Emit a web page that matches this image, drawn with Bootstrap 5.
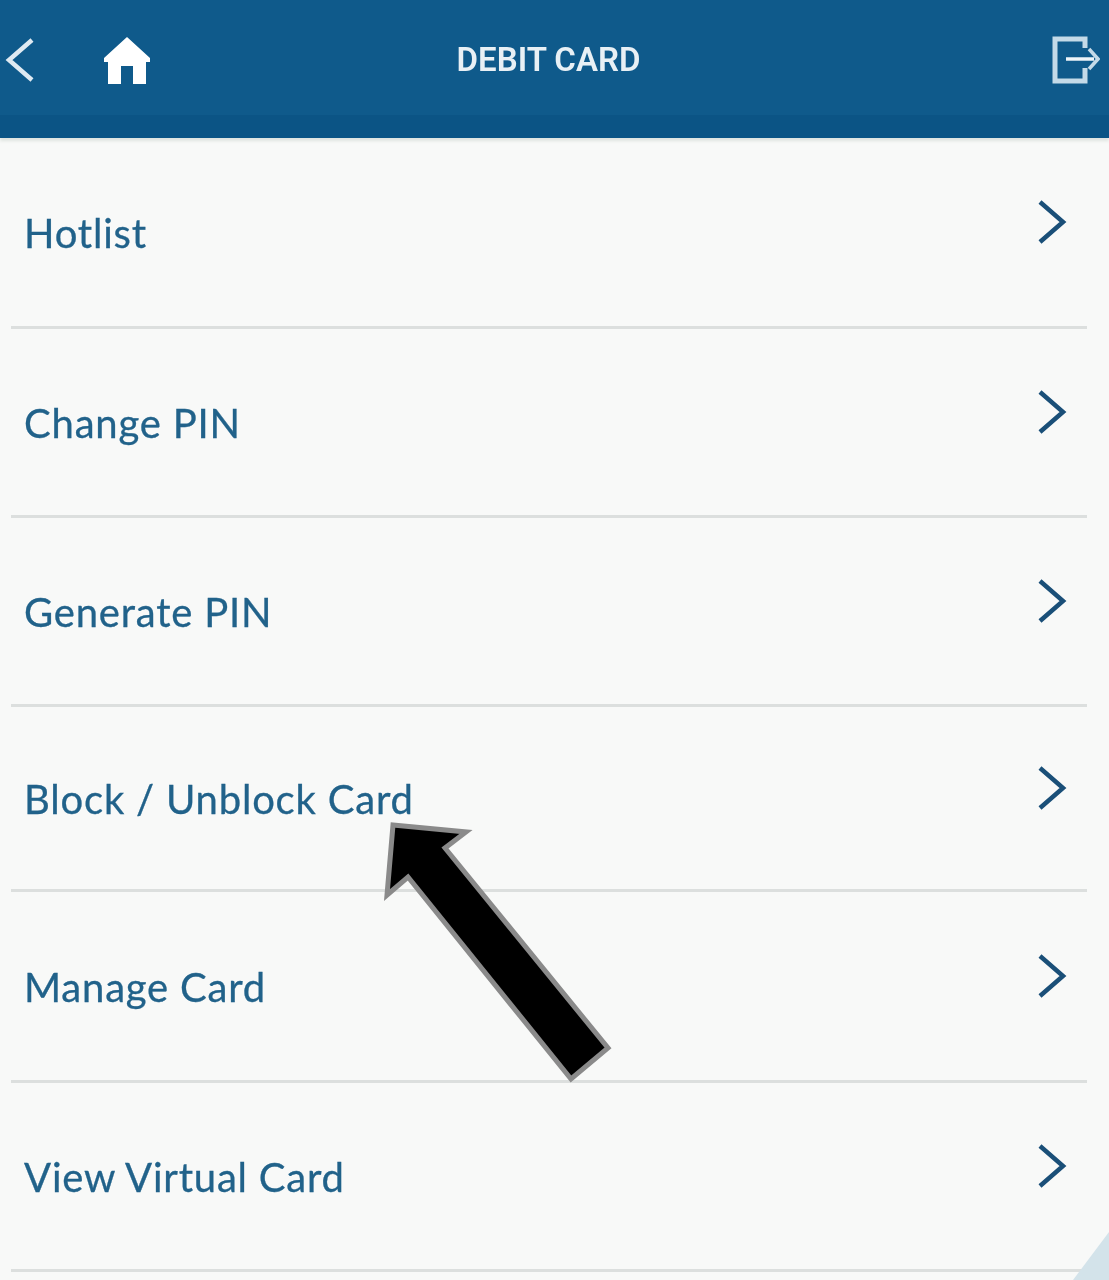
<!DOCTYPE html>
<html lang="en">
<head>
  <meta charset="UTF-8">
  <title>Debit Card</title>
  <link href="https://cdn.jsdelivr.net/npm/bootstrap@5.3.3/dist/css/bootstrap.min.css" rel="stylesheet">
  <style>
    html, body { height: 1280px; overflow: hidden; }
    body { background: #f8f9f8; font-family: "Lato", "Liberation Sans", sans-serif; position: relative; }
    .top-head { height: 138px; background: #0f5a8b; border-bottom: 23px solid #0b5485; box-shadow: 0 3px 3px #dfe4e0; padding: 5px 9px 0 5px; }
    .head-title { color: #e8f0f5; font-size: 33px; font-weight: 600; font-family: "Roboto", sans-serif; margin-left: -8px; filter: blur(.5px); }
    .head-side { width: 150px; filter: blur(.5px); }
    .home-icon { margin-left: 69px; }
    .menu-list { --bs-list-group-bg: transparent; --bs-list-group-border-width: 0; padding: 0 22px 0 11px; }
    .menu-row { height: 189px; padding: 0 20px 0 13px; background: transparent; border-bottom: 3px solid #dcdfde !important; color: #21628a; font-size: 40px; }
    .menu-row:first-child { height: 191px; }
    .menu-row:nth-child(4) { height: 185px; }
    .menu-row:nth-child(5) { height: 191px; }
    .menu-label { letter-spacing: .8px; padding-top: 2px; -webkit-text-stroke: .3px #21628a; filter: blur(.6px); }
    .row-chev { margin: 0 0 21px 0; filter: blur(.5px); }
    .big-arrow { position: absolute; left: 380px; top: 815px; }
    .corner-bit { position: absolute; right: 0; bottom: 0; }
  </style>
</head>
<body>

  <header class="top-head d-flex align-items-center justify-content-between">
    <div class="head-side d-flex align-items-center">
      <svg width="30" height="46" viewBox="0 0 30 46" fill="none" stroke="#dfeaf2" stroke-width="4.5"><path d="M27 3 L4 23 L27 43"/></svg>
      <svg class="home-icon" width="46" height="47" viewBox="0 0 46 47" fill="#fff"><path d="M23 0 L46 21 V25 L42 25 V47 L29 47 V29 L17 29 V47 L4 47 V25 L0 25 V21 Z"/></svg>
    </div>
    <div class="head-title">DEBIT CARD</div>
    <div class="head-side d-flex justify-content-end">
      <svg width="48" height="48" viewBox="0 0 48 48" fill="none" stroke="#c4dae8" stroke-width="5"><path d="M33 12 V3 H3 V45 H33 V32"/><path d="M14 23 H42" stroke="#eef5f9" stroke-width="3.5"/><path d="M37 13 L46 23 L37 33" stroke-width="3.5"/></svg>
    </div>
  </header>

  <div class="list-group list-group-flush menu-list">
    <div class="list-group-item menu-row d-flex align-items-center justify-content-between"><span class="menu-label">Hotlist</span><svg class="row-chev" width="30" height="46" viewBox="0 0 30 46" fill="none" stroke="#1a4f78" stroke-width="4.5"><path d="M3 3 L26 23 L3 43"/></svg></div>
    <div class="list-group-item menu-row d-flex align-items-center justify-content-between"><span class="menu-label">Change PIN</span><svg class="row-chev" width="30" height="46" viewBox="0 0 30 46" fill="none" stroke="#1a4f78" stroke-width="4.5"><path d="M3 3 L26 23 L3 43"/></svg></div>
    <div class="list-group-item menu-row d-flex align-items-center justify-content-between"><span class="menu-label">Generate PIN</span><svg class="row-chev" width="30" height="46" viewBox="0 0 30 46" fill="none" stroke="#1a4f78" stroke-width="4.5"><path d="M3 3 L26 23 L3 43"/></svg></div>
    <div class="list-group-item menu-row d-flex align-items-center justify-content-between"><span class="menu-label">Block / Unblock Card</span><svg class="row-chev" width="30" height="46" viewBox="0 0 30 46" fill="none" stroke="#1a4f78" stroke-width="4.5"><path d="M3 3 L26 23 L3 43"/></svg></div>
    <div class="list-group-item menu-row d-flex align-items-center justify-content-between"><span class="menu-label">Manage Card</span><svg class="row-chev" width="30" height="46" viewBox="0 0 30 46" fill="none" stroke="#1a4f78" stroke-width="4.5"><path d="M3 3 L26 23 L3 43"/></svg></div>
    <div class="list-group-item menu-row d-flex align-items-center justify-content-between"><span class="menu-label">View Virtual Card</span><svg class="row-chev" width="30" height="46" viewBox="0 0 30 46" fill="none" stroke="#1a4f78" stroke-width="4.5"><path d="M3 3 L26 23 L3 43"/></svg></div>
  </div>

  <svg class="big-arrow" width="240" height="275" viewBox="380 815 240 275"><path d="M393 825 L466 832 L445 848 L608 1048 L571 1079 L408 877 L387 895 Z" fill="#000" stroke="#8a8a8a" stroke-width="5"/></svg>
  <svg class="corner-bit" width="36" height="48" viewBox="0 0 36 48"><path d="M36 0 V48 H0 Z" fill="#d3e3ea"/></svg>

</body>
</html>
